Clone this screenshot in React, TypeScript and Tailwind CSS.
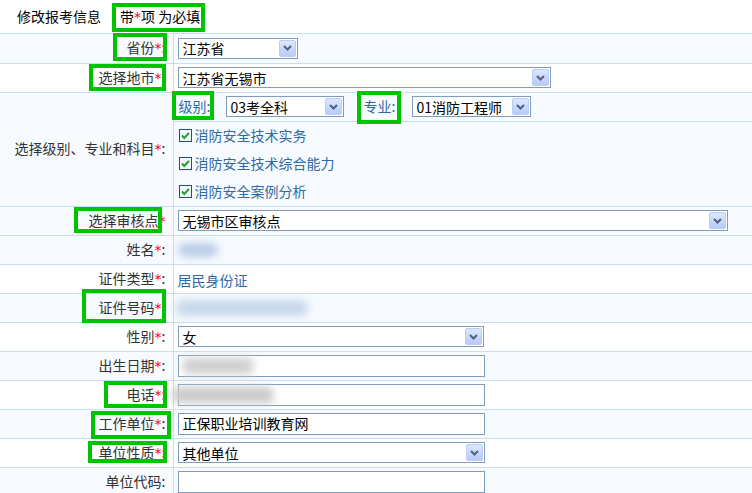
import React from 'react';

const FONT = '"Noto Sans CJK SC", "Noto Sans", sans-serif';

function Star() {
  return <span className="text-[#ff0000] [font-family:'DejaVu_Sans',sans-serif]">*</span>;
}

function Arrow() {
  return (
    <span className="flex h-[17px] w-[17px] shrink-0 items-center justify-center rounded-[2px] border border-[#b9cdf6] bg-gradient-to-b from-[#dde7fd] to-[#b7cbf7]">
      <svg width="9" height="6" viewBox="0 0 9 6">
        <path d="M1 1 L4.5 4.5 L8 1" fill="none" stroke="#4d6185" strokeWidth="2" />
      </svg>
    </span>
  );
}

function Select({ value, w }: { value: string; w: string }) {
  return (
    <div className={`flex h-[21px] items-center justify-between border border-[#7f9db9] bg-white pl-[4px] pr-[1px] text-[14px] text-black ${w}`}>
      <span className="leading-none">{value}</span>
      <Arrow />
    </div>
  );
}

function Input({ children }: { children?: React.ReactNode }) {
  return (
    <div className="relative flex h-[22px] w-[307px] items-center border border-[#7f9db9] bg-white pl-[4px] text-[14px] text-black">
      {children}
    </div>
  );
}

function Check({ label }: { label: string }) {
  return (
    <div className="flex h-[28px] items-center gap-[3px] pl-[5px] text-[14px] text-[#2f6aa5]">
      <svg width="13" height="13" viewBox="0 0 13 13">
        <rect x="0.5" y="0.5" width="12" height="12" fill="#f4f7fb" stroke="#1c5180" />
        <path d="M3 6.5 L5.3 9 L10 3.8" fill="none" stroke="#21a121" strokeWidth="2" />
      </svg>
      <span>{label}</span>
    </div>
  );
}

function Row({ label, star = true, colon = true, light, children }: { label: string; star?: boolean; colon?: boolean; light?: boolean; children?: React.ReactNode }) {
  return (
    <tr className={`h-[29px] border-b border-[#c6e0f3] ${light ? 'bg-[#f7fbff]' : 'bg-white'}`}>
      <td className="w-[173px] border-r border-[#c6e0f3] pr-[7px] text-right text-[14px] text-[#333]">
        {label}
        {star && <Star />}
        {colon && ':'}
      </td>
      <td className="pl-[4px] align-middle">{children}</td>
    </tr>
  );
}

function GreenBox({ cls }: { cls: string }) {
  return <div className={`pointer-events-none absolute border-[4px] border-[#00c400] ${cls}`} />;
}

export default function App() {
  return (
    <div className="relative h-[493px] w-[752px] overflow-hidden bg-white" style={{ fontFamily: FONT }}>
      <div className="flex h-[34px] items-center gap-[19px] border-b border-[#c6e0f3] pl-[17px] text-[14px] text-black">
        <span>修改报考信息</span>
        <span>
          带<Star />项 为必填
        </span>
      </div>
      <table className="w-full border-collapse">
        <tbody>
          <Row label="省份" light>
            <Select value="江苏省" w="w-[120px]" />
          </Row>
          <Row label="选择地市">
            <Select value="江苏省无锡市" w="w-[373px]" />
          </Row>
          <tr className="border-b border-[#c6e0f3] bg-[#f7fbff]">
            <td className="w-[173px] border-r border-[#c6e0f3] pr-[7px] text-right text-[14px] text-[#333]">
              选择级别、专业和科目<Star />:
            </td>
            <td className="p-0">
              <div className="flex h-[29px] items-center border-b border-[#c6e0f3] pl-[5px] text-[14px] text-[#2f6aa5]">
                <span className="w-[47px]">级别:</span>
                <Select value="03考全科" w="w-[118px]" />
                <span className="ml-[20px] w-[48px]">专业:</span>
                <Select value="01消防工程师" w="w-[119px]" />
              </div>
              <Check label="消防安全技术实务" />
              <Check label="消防安全技术综合能力" />
              <Check label="消防安全案例分析" />
            </td>
          </tr>
          <Row label="选择审核点" colon={false} light>
            <Select value="无锡市区审核点" w="w-[550px]" />
          </Row>
          <Row label="姓名" light>
            <div className="h-[14px] w-[40px] rounded-full bg-[#b9cbe6] blur-[4px]" />
          </Row>
          <Row label="证件类型">
            <span className="text-[14px] text-[#2f6aa5]">居民身份证</span>
          </Row>
          <Row label="证件号码" light>
            <div className="ml-[-2px] h-[16px] w-[132px] rounded-full bg-[#c6d6eb] blur-[4px]" />
          </Row>
          <Row label="性别">
            <Select value="女" w="w-[306px]" />
          </Row>
          <Row label="出生日期" light>
            <Input>
              <div className="h-[16px] w-[70px] rounded-sm bg-[#cfcfcf] blur-[4px]" />
            </Input>
          </Row>
          <Row label="电话">
            <Input>
              <div className="ml-[-10px] h-[16px] w-[100px] rounded-sm bg-[#c9c9c9] blur-[4px]" />
            </Input>
          </Row>
          <Row label="工作单位" light>
            <Input>正保职业培训教育网</Input>
          </Row>
          <Row label="单位性质">
            <Select value="其他单位" w="w-[307px]" />
          </Row>
          <Row label="单位代码" star={false} light>
            <Input />
          </Row>
        </tbody>
      </table>

      <GreenBox cls="left-[112px] top-[3px] h-[29px] w-[93px]" />
      <GreenBox cls="left-[113px] top-[33px] h-[28px] w-[54px]" />
      <GreenBox cls="left-[89px] top-[64px] h-[27px] w-[77px]" />
      <GreenBox cls="left-[172px] top-[91px] h-[29px] w-[42px]" />
      <GreenBox cls="left-[357px] top-[91px] h-[33px] w-[44px]" />
      <GreenBox cls="left-[74px] top-[207px] h-[26px] w-[88px]" />
      <GreenBox cls="left-[82px] top-[289px] h-[34px] w-[84px]" />
      <GreenBox cls="left-[104px] top-[381px] h-[27px] w-[63px]" />
      <GreenBox cls="left-[91px] top-[411px] h-[28px] w-[80px]" />
      <GreenBox cls="left-[88px] top-[441px] h-[22px] w-[79px]" />
    </div>
  );
}
